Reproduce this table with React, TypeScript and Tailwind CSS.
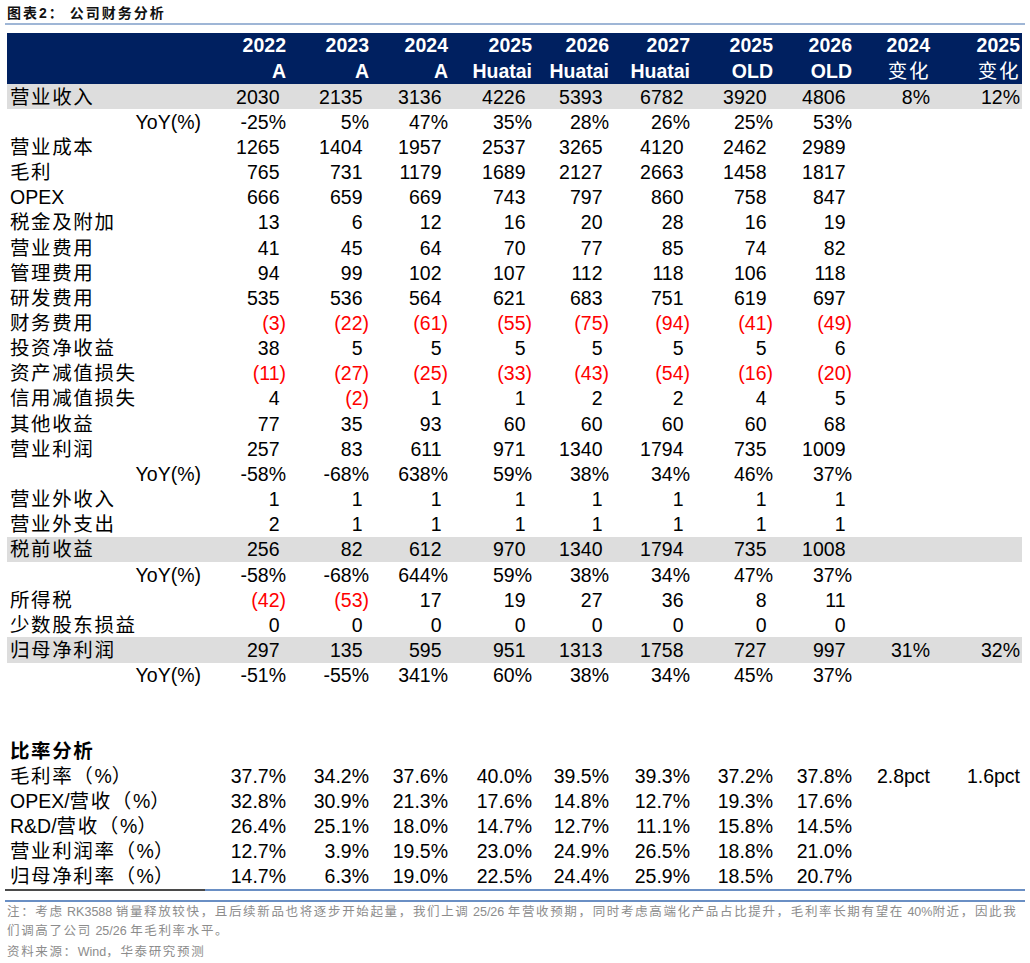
import React from "react";

type Row = {
  label: string;
  values?: string[];
  grey?: boolean;
  yoy?: boolean;
  bold?: boolean;
};

const headers: [string, string][] = [
  ["2022", "A"],
  ["2023", "A"],
  ["2024", "A"],
  ["2025", "Huatai"],
  ["2026", "Huatai"],
  ["2027", "Huatai"],
  ["2025", "OLD"],
  ["2026", "OLD"],
  ["2024", "变化"],
  ["2025", "变化"],
];

const rows: Row[] = [
  { label: "营业收入", grey: true, values: ["2030", "2135", "3136", "4226", "5393", "6782", "3920", "4806", "8%", "12%"] },
  { label: "YoY(%)", yoy: true, values: ["-25%", "5%", "47%", "35%", "28%", "26%", "25%", "53%"] },
  { label: "营业成本", values: ["1265", "1404", "1957", "2537", "3265", "4120", "2462", "2989"] },
  { label: "毛利", values: ["765", "731", "1179", "1689", "2127", "2663", "1458", "1817"] },
  { label: "OPEX", values: ["666", "659", "669", "743", "797", "860", "758", "847"] },
  { label: "税金及附加", values: ["13", "6", "12", "16", "20", "28", "16", "19"] },
  { label: "营业费用", values: ["41", "45", "64", "70", "77", "85", "74", "82"] },
  { label: "管理费用", values: ["94", "99", "102", "107", "112", "118", "106", "118"] },
  { label: "研发费用", values: ["535", "536", "564", "621", "683", "751", "619", "697"] },
  { label: "财务费用", values: ["(3)", "(22)", "(61)", "(55)", "(75)", "(94)", "(41)", "(49)"] },
  { label: "投资净收益", values: ["38", "5", "5", "5", "5", "5", "5", "6"] },
  { label: "资产减值损失", values: ["(11)", "(27)", "(25)", "(33)", "(43)", "(54)", "(16)", "(20)"] },
  { label: "信用减值损失", values: ["4", "(2)", "1", "1", "2", "2", "4", "5"] },
  { label: "其他收益", values: ["77", "35", "93", "60", "60", "60", "60", "68"] },
  { label: "营业利润", values: ["257", "83", "611", "971", "1340", "1794", "735", "1009"] },
  { label: "YoY(%)", yoy: true, values: ["-58%", "-68%", "638%", "59%", "38%", "34%", "46%", "37%"] },
  { label: "营业外收入", values: ["1", "1", "1", "1", "1", "1", "1", "1"] },
  { label: "营业外支出", values: ["2", "1", "1", "1", "1", "1", "1", "1"] },
  { label: "税前收益", grey: true, values: ["256", "82", "612", "970", "1340", "1794", "735", "1008"] },
  { label: "YoY(%)", yoy: true, values: ["-58%", "-68%", "644%", "59%", "38%", "34%", "47%", "37%"] },
  { label: "所得税", values: ["(42)", "(53)", "17", "19", "27", "36", "8", "11"] },
  { label: "少数股东损益", values: ["0", "0", "0", "0", "0", "0", "0", "0"] },
  { label: "归母净利润", grey: true, values: ["297", "135", "595", "951", "1313", "1758", "727", "997", "31%", "32%"] },
  { label: "YoY(%)", yoy: true, values: ["-51%", "-55%", "341%", "60%", "38%", "34%", "45%", "37%"] },
  { label: "" },
  { label: "" },
  { label: "比率分析", bold: true },
  { label: "毛利率（%）", values: ["37.7%", "34.2%", "37.6%", "40.0%", "39.5%", "39.3%", "37.2%", "37.8%", "2.8pct", "1.6pct"] },
  { label: "OPEX/营收（%）", values: ["32.8%", "30.9%", "21.3%", "17.6%", "14.8%", "12.7%", "19.3%", "17.6%"] },
  { label: "R&D/营收（%）", values: ["26.4%", "25.1%", "18.0%", "14.7%", "12.7%", "11.1%", "15.8%", "14.5%"] },
  { label: "营业利润率（%）", values: ["12.7%", "3.9%", "19.5%", "23.0%", "24.9%", "26.5%", "18.8%", "21.0%"] },
  { label: "归母净利率（%）", values: ["14.7%", "6.3%", "19.0%", "22.5%", "24.4%", "25.9%", "18.5%", "20.7%"] },
];

const grid =
  "grid grid-cols-[198px_83px_83px_79px_84px_77px_81px_83px_79px_78px_90px]";

const cjk = /([\u3000-\u9fff\uff00-\uffef]+)/;

// CJK runs get a little extra spacing, latin runs stay tight
function Spaced({ text, wide }: { text: string; wide?: boolean }) {
  const parts = text.split(cjk).filter(Boolean);
  return (
    <>
      {parts.map((p, i) =>
        cjk.test(p) ? (
          <span key={i} className={wide ? "tracking-[1.65px]" : "tracking-[1.6px]"}>
            {p}
          </span>
        ) : (
          <span key={i}>{p}</span>
        )
      )}
    </>
  );
}

function Cell({ v }: { v: string }) {
  const neg = v.startsWith("(");
  const pct = v.endsWith("%") || v.endsWith("pct");
  return (
    <div
      className={`text-right ${neg ? "pr-[2px] text-[#ff0000]" : pct ? "pr-[2px]" : "pr-[8.5px]"}`}
    >
      {v}
    </div>
  );
}

export default function App() {
  return (
    <div className="relative h-[963px] w-[1030px] overflow-hidden bg-white font-['Liberation_Sans','Noto_Sans_CJK_SC',sans-serif] text-black">
      <div className="h-[23px] pl-[7px] pt-[4px] text-[14px] font-bold leading-[18px] tracking-[2px] text-[#111]">
        图表2：<span className="ml-[5px]">公司财务分析</span>
      </div>
      <div className="mx-[5px] h-[2px] bg-[#9fb6d6]" />

      <div className="ml-[7px] mt-[8px] w-[1015px]">
        <div className={`${grid} h-[51px] bg-[#002060] text-[19.5px] leading-[25.5px] text-white`}>
          <div />
          {headers.map(([a, b], i) => (
            <div key={i} className="pr-[2px] text-right font-bold">
              <div>{a}</div>
              <div className={b === "变化" ? "font-normal" : ""}>
                <Spaced text={b} />
              </div>
            </div>
          ))}
        </div>

        {rows.map((r, i) => (
          <div
            key={i}
            className={`${grid} h-[25.17px] items-center text-[19.5px] leading-[24px] ${r.grey ? "bg-[#dddddd]" : ""}`}
          >
            <div
              className={`whitespace-nowrap ${r.yoy ? "pr-[4px] text-right" : "pl-[3px]"} ${r.bold ? "font-bold" : ""}`}
            >
              <Spaced text={r.label} />
            </div>
            {(r.values ?? []).map((v, j) => (
              <Cell key={j} v={v} />
            ))}
          </div>
        ))}
      </div>

      <div className="mx-[5px] flex h-[2px]">
        <div className="w-[200px] bg-[#4a4a4a]" />
        <div className="flex-1 bg-[#6a8fc4]" />
      </div>
      <div className="mx-[5px] mt-[9px] h-[2px] bg-[#6a8fc4]" />

      <div className="pl-[7px] pt-[1px] text-[12.5px] leading-[19px] text-[#8c8c8c]">
        <div className="whitespace-nowrap">
          <Spaced
            wide
            text="注：考虑 RK3588 销量释放较快，且后续新品也将逐步开始起量，我们上调 25/26 年营收预期，同时考虑高端化产品占比提升，毛利率长期有望在 40%附近，因此我"
          />
        </div>
        <div className="whitespace-nowrap">
          <Spaced wide text="们调高了公司 25/26 年毛利率水平。" />
        </div>
        <div className="mt-[2px] whitespace-nowrap">
          <Spaced wide text="资料来源：Wind，华泰研究预测" />
        </div>
      </div>
    </div>
  );
}
